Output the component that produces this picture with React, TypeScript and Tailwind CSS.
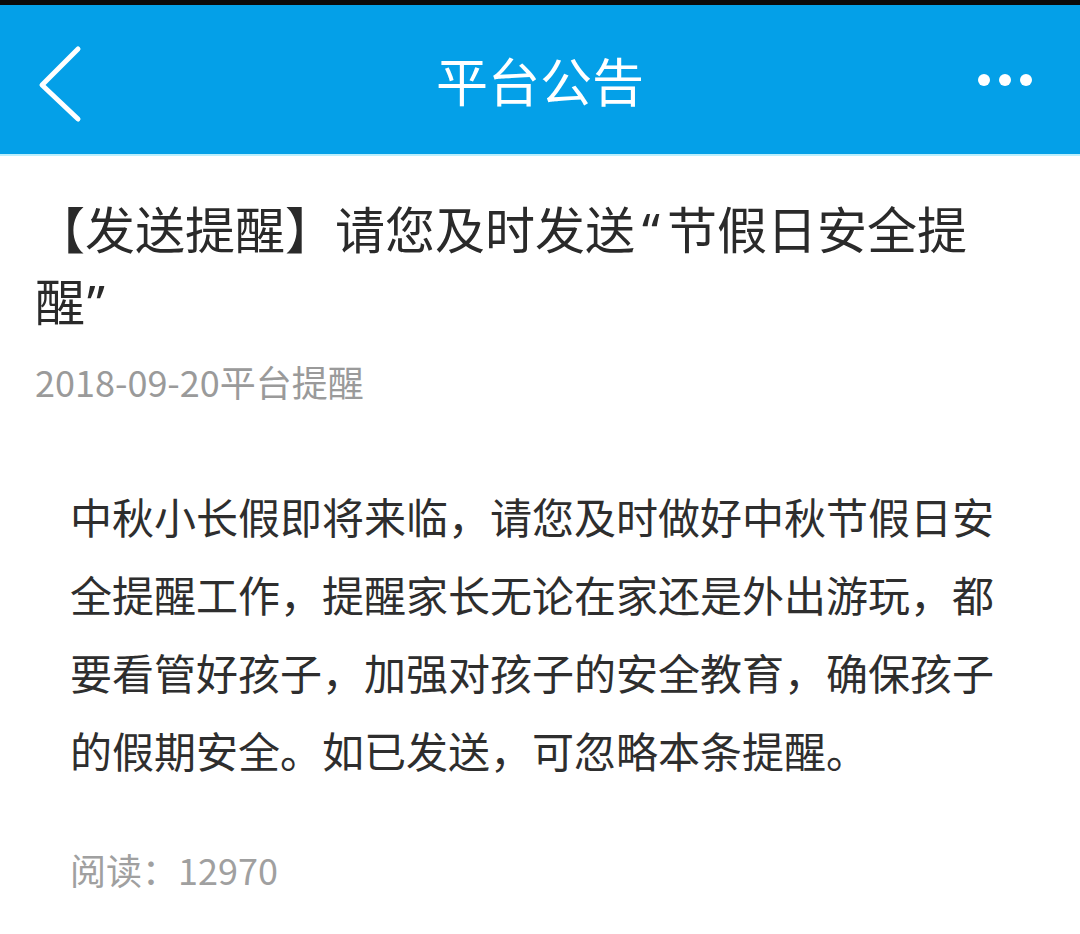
export default function App() {
  const cjk = { fontFamily: '"Noto Sans CJK SC", "Noto Sans", sans-serif' };
  return (
    <div className="min-h-screen w-[1080px] bg-white" style={cjk}>
      {/* status strip */}
      <div className="h-[5px] bg-[#0b0b0b]" />
      {/* header */}
      <div className="relative flex h-[149px] items-center justify-center bg-[#04a0e8]">
        <svg className="absolute left-[36px] top-[40px]" width="50" height="78" viewBox="0 0 50 78">
          <polyline points="42,4 6,40 42,74" fill="none" stroke="#ffffff" strokeWidth="5" strokeLinecap="round" strokeLinejoin="round" />
        </svg>
        <h1 className="text-[52px] leading-none text-white">平台公告</h1>
        <div className="absolute right-[48px] top-[69px] flex gap-[9px]">
          <span className="h-[12px] w-[12px] rounded-full bg-white" />
          <span className="h-[12px] w-[12px] rounded-full bg-white" />
          <span className="h-[12px] w-[12px] rounded-full bg-white" />
        </div>
      </div>
      <div className="h-[2px] bg-[#bdeffc]" />

      <div className="pl-[35px] pr-[80px] pt-[35px]">
        <h2 className="text-[50px] leading-[72px] text-[#2a2a2a]">
          【发送提醒】请您及时发送<span className="mx-[7px] font-['Noto_Sans',sans-serif] leading-none">“</span>节假日安全提醒<span className="ml-[2px] font-['Noto_Sans',sans-serif] leading-none">”</span>
        </h2>
        <p className="mt-[21px] text-[36px] leading-[50px] text-[#9a9a9a]">2018-09-20平台提醒</p>
      </div>

      <div className="mt-[71px] pl-[70px] pr-[70px]">
        <p className="text-[42px] leading-[78px] text-[#2e2e2e]">
          中秋小长假即将来临，请您及时做好中秋节假日安全提醒工作，提醒家长无论在家还是外出游玩，都要看管好孩子，加强对孩子的安全教育，确保孩子的假期安全。如已发送，可忽略本条提醒。
        </p>
        <p className="mt-[55px] text-[36px] leading-[50px] text-[#a0a0a0]">阅读：12970</p>
      </div>
    </div>
  );
}
